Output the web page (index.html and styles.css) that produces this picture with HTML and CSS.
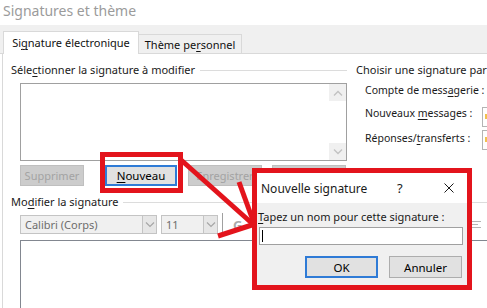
FILE: index.html
```html
<!DOCTYPE html>
<html lang="fr">
<head>
    <meta charset="UTF-8">
    <title>Signatures et thème</title>
    <link rel="stylesheet" href="styles.css">
</head>
<body>
    <div class="window-title">Signatures et thème</div>

    <div class="tabs">
        <div class="tab active">Si<u>g</u>nature électronique</div>
        <div class="tab">Thème pe<u>r</u>sonnel</div>
    </div>

    <div class="panel">
        <div class="top-row">
            <section class="select-box">
                <div class="group-head"><span>Séle<u>c</u>tionner la signature à modifier</span></div>
                <div class="listbox">
                    <div class="scrollbar">
                        <span class="sb-btn">
                            <svg viewBox="0 0 10 6" width="10" height="6"><path d="M1 5.5L5 1.5 9 5.5" fill="none" stroke="#c2c2c2" stroke-width="1.3"/></svg>
                        </span>
                        <span class="sb-btn">
                            <svg viewBox="0 0 10 6" width="10" height="6"><path d="M1 0.5L5 4.5 9 0.5" fill="none" stroke="#c2c2c2" stroke-width="1.3"/></svg>
                        </span>
                    </div>
                </div>
                <div class="btn-row">
                    <button class="btn disabled btn-delete">Supprimer</button>
                    <button class="btn default btn-new"><u>N</u>ouveau</button>
                    <button class="btn disabled btn-save">Enregistrer</button>
                    <button class="btn disabled btn-rename"></button>
                </div>
            </section>

            <section class="defaults">
                <div class="defaults-head">Choisir une signature par défaut</div>
                <div class="field-account">Compte de mess<u>a</u>gerie :</div>
                <div class="field field-new">
                    <span class="field-label">Nouveaux <u>m</u>essages :</span>
                    <span class="combo-stub"><i></i></span>
                </div>
                <div class="field field-reply">
                    <span class="field-label">Réponses/<u>t</u>ransferts :</span>
                    <span class="combo-stub"><i></i></span>
                </div>
            </section>
        </div>

        <section class="modify">
            <div class="group-head"><span>Mo<u>d</u>ifier la signature</span></div>
            <div class="toolbar">
                <div class="combo font-combo">
                    <span class="combo-text">Calibri (Corps)</span>
                    <span class="combo-arrow">
                        <svg viewBox="0 0 10 6" width="10" height="6"><path d="M1 0.5L5 4.5 9 0.5" fill="none" stroke="#a6a6a6" stroke-width="1.2"/></svg>
                    </span>
                </div>
                <div class="combo size-combo">
                    <span class="combo-text">11</span>
                    <span class="combo-arrow">
                        <svg viewBox="0 0 10 6" width="10" height="6"><path d="M1 0.5L5 4.5 9 0.5" fill="none" stroke="#a6a6a6" stroke-width="1.2"/></svg>
                    </span>
                </div>
                <span class="tool-sep"></span>
                <span class="tool-bold">G</span>
                <span class="tool-spacer"></span>
                <span class="tool-align">
                    <svg viewBox="0 0 10 10" width="10" height="10"><path d="M0 1.5H9M0 4.5H6M0 7.5H9" stroke="#b5b5b5" stroke-width="1"/></svg>
                </span>
            </div>
            <div class="editor"></div>
        </section>
    </div>

    <!-- annotations over the screenshot -->
    <div class="mark mark-new"></div>

    <svg class="arrow" viewBox="0 0 487 308" width="487" height="308">
        <g stroke="#e3141c" stroke-width="5" fill="none">
            <line x1="180" y1="159" x2="255" y2="226"/>
            <line x1="239" y1="182" x2="255" y2="226"/>
            <line x1="218" y1="236" x2="255" y2="224"/>
        </g>
    </svg>

    <div class="dialog">
        <div class="dialog-title">
            <span class="dialog-name">Nouvelle signature</span>
            <span class="dialog-help">?</span>
            <span class="dialog-close">
                <svg viewBox="0 0 10 10" width="10" height="10"><path d="M0.5 0.5L9.5 9.5M9.5 0.5L0.5 9.5" stroke="#1a1a1a" stroke-width="1"/></svg>
            </span>
        </div>
        <div class="dialog-body">
            <div class="dialog-label"><u>T</u>apez un nom pour cette signature :</div>
            <div class="dialog-input"><span class="caret"></span></div>
            <div class="dialog-buttons">
                <button class="btn default btn-ok">OK</button>
                <button class="btn btn-cancel">Annuler</button>
            </div>
        </div>
    </div>
</body>
</html>
```

FILE: styles.css
```css
* {
    margin: 0;
    padding: 0;
    box-sizing: border-box;
}

body {
    font-family: "Noto Sans", "Open Sans", sans-serif;
    font-size: 11px;
    color: #000000;
    background-color: #FFFFFF;
    width: 487px;
    height: 308px;
    overflow: hidden;
    position: relative;
}

u {
    text-decoration-thickness: 1px;
    text-underline-offset: 2px;
}

.window-title {
    height: 25px;
    padding-left: 3px;
    font-size: 14px;
    line-height: 22px;
    color: #9b9b9b;
}

/* tabs */

.tabs {
    height: 29px;
    background-color: #F0F0F0;
    border-bottom: 1px solid #D9D9D9;
    display: flex;
    align-items: flex-end;
    padding-left: 3px;
}

.tab {
    height: 19px;
    width: 103px;
    border: 1px solid #D9D9D9;
    border-left: none;
    border-bottom: none;
    display: flex;
    align-items: center;
    justify-content: center;
    font-size: 11px;
    color: #111111;
}

.tab.active {
    height: 23px;
    width: 136px;
    margin-bottom: -1px;
    background-color: #FFFFFF;
    border-left: 1px solid #D9D9D9;
    padding-bottom: 1px;
}

/* main panel */

.panel {
    margin-left: 2px;
    border-left: 1px solid #D9D9D9;
    padding-left: 8px;
    padding-top: 8px;
}

.top-row {
    display: flex;
}

.select-box {
    width: 336px;
    flex-shrink: 0;
}

.group-head {
    display: flex;
    align-items: center;
    height: 16px;
    line-height: 16px;
    color: #1a1a1a;
}

.group-head::after {
    content: "";
    flex: 1;
    border-top: 1px solid #DCDCDC;
    margin-left: 5px;
}

.listbox {
    margin: 5px 0 0 9px;
    height: 78px;
    border: 1px solid #A0A0A0;
    display: flex;
    justify-content: flex-end;
}

.scrollbar {
    width: 17px;
    display: flex;
    flex-direction: column;
    justify-content: space-between;
}

.sb-btn {
    height: 17px;
    display: flex;
    align-items: center;
    justify-content: center;
    background-color: #F0F0F0;
}

.btn-row {
    display: flex;
    margin: 4px 0 0 9px;
    height: 21px;
}

.btn {
    font-family: inherit;
    font-size: 11px;
    height: 21px;
    border: 1px solid #ADADAD;
    background-color: #E1E1E1;
    color: #000000;
}

.btn.disabled {
    background-color: #CCCCCC;
    border-color: #BFBFBF;
    color: #A3A3A3;
}

.btn.default {
    border: 2px solid #2F7BD6;
}

.btn-delete {
    width: 64px;
}

.btn-new {
    width: 72px;
    margin-left: 21px;
    font-size: 11.5px;
}

.btn-save {
    width: 74px;
    margin-left: 11px;
}

.btn-rename {
    width: 74px;
    margin-left: 10px;
}

/* default signature column */

.defaults {
    flex-shrink: 0;
    width: 160px;
    margin-left: 9px;
    white-space: nowrap;
    color: #1a1a1a;
}

.defaults-head {
    height: 16px;
    line-height: 16px;
}

.field-account {
    margin-top: 4px;
    padding-left: 9px;
    line-height: 16px;
    font-size: 10.5px;
}

.field {
    display: flex;
    align-items: flex-start;
    padding-left: 9px;
    line-height: 16px;
    font-size: 10.5px;
}

.field-new {
    margin-top: 7px;
}

.field-reply {
    margin-top: 3px;
}

.field-label {
    width: 117px;
    flex-shrink: 0;
}

.combo-stub {
    flex-shrink: 0;
    width: 30px;
    height: 20px;
    margin-top: 2px;
    border: 1px solid #B4B4B4;
    border-right: none;
    padding: 6px 0 0 2px;
}

.field-reply .combo-stub {
    margin-top: 0;
}

.combo-stub i {
    display: block;
    width: 2px;
    height: 5px;
    background-color: #F2C14E;
}

/* modify signature */

.modify {
    margin-top: 8px;
}

.toolbar {
    display: flex;
    align-items: center;
    margin: 5px 0 0 9px;
    height: 19px;
}

.combo {
    height: 19px;
    display: flex;
    border: 1px solid #C4C4C4;
    background-color: #F0F0F0;
}

.font-combo {
    width: 137px;
}

.size-combo {
    width: 57px;
    margin-left: 4px;
}

.combo-text {
    flex: 1;
    line-height: 17px;
    padding-left: 4px;
    color: #6D6D6D;
}

.combo-arrow {
    width: 14px;
    display: flex;
    align-items: center;
    justify-content: center;
    border-left: 1px solid #C4C4C4;
    background-color: #E6E6E6;
}

.tool-sep {
    width: 1px;
    height: 24px;
    margin-left: 4px;
    background-color: #A0A0A0;
}

.tool-bold {
    margin-left: 10px;
    font-size: 13px;
    font-weight: bold;
    color: #AAAAAA;
}

.tool-spacer {
    flex: 1;
}

.tool-align {
    display: flex;
    margin-right: 5px;
}

.editor {
    margin: 6px 0 0 9px;
    height: 80px;
    border: 1px solid #828790;
    border-right: none;
}

/* annotations */

.mark {
    position: absolute;
    border: 5px solid #E3141C;
}

.mark-new {
    left: 100px;
    top: 152px;
    width: 83px;
    height: 41px;
}

.arrow {
    position: absolute;
    left: 0;
    top: 0;
}

.dialog {
    position: absolute;
    left: 252px;
    top: 168px;
    width: 220px;
    height: 122px;
    border: 5px solid #E3141C;
    background-color: #F0F0F0;
    display: flex;
    flex-direction: column;
}

.dialog-title {
    height: 30px;
    background-color: #FFFFFF;
    display: flex;
    align-items: center;
    padding-left: 4px;
    font-size: 12px;
    color: #1a1a1a;
}

.dialog-name {
    flex: 1;
}

.dialog-help {
    width: 10px;
    font-size: 13px;
}

.dialog-close {
    display: flex;
    margin: 0 13px 0 37px;
}

.dialog-body {
    padding: 6px 5px 0 1px;
}

.dialog-label {
    line-height: 16px;
    color: #1a1a1a;
}

.dialog-input {
    margin: 2px 0 0 1px;
    width: 204px;
    height: 18px;
    border: 1px solid #A0A0A0;
    background-color: #FFFFFF;
    padding: 2px 0 0 2px;
}

.caret {
    display: block;
    width: 1px;
    height: 12px;
    background-color: #000000;
}

.dialog-buttons {
    display: flex;
    justify-content: flex-end;
    gap: 11px;
    margin-top: 11px;
}

.btn-ok,
.btn-cancel {
    width: 73px;
    height: 22px;
    font-size: 11.5px;
}
```
